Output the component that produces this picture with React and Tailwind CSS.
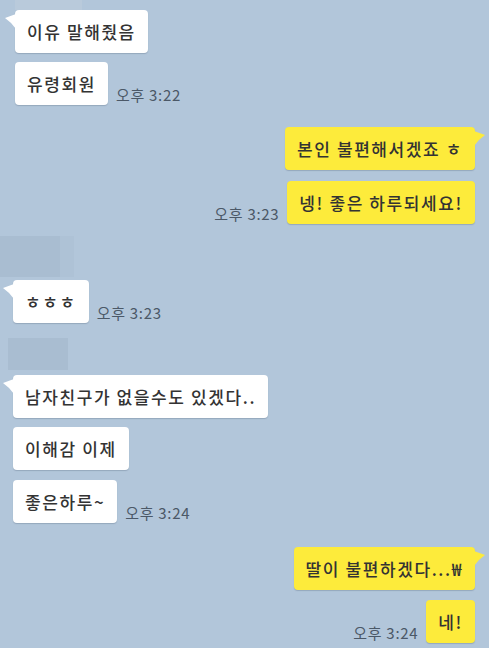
import React from 'react';

const font = { fontFamily: '"Noto Sans CJK KR", "Noto Sans", sans-serif' };

const TailLeft = () => (
  <svg className="absolute left-[-11px] top-[4px]" width="12" height="15" viewBox="0 0 12 15">
    <path d="M12 0 L1 4 Q7 8 12 15 Z" fill="#ffffff" />
  </svg>
);

const TailRight = () => (
  <svg className="absolute right-[-11px] top-[4px]" width="12" height="15" viewBox="0 0 12 15">
    <path d="M0 0 L11 4 Q5 8 0 15 Z" fill="#fdeb3b" />
  </svg>
);

const Bubble = ({ text, mine, tail }) => (
  <div
    className={`relative h-[43px] flex items-center px-[12px] rounded-[4px] text-[17px] font-medium text-[#333333] shadow-[0_1px_1px_rgba(60,80,100,0.25)] ${
      mine ? 'bg-[#fdeb3b]' : 'bg-white'
    }`}
  >
    {tail && (mine ? <TailRight /> : <TailLeft />)}
    <span className="tracking-[1.6px] whitespace-nowrap">{text}</span>
  </div>
);

const Time = ({ t }) => (
  <span className="text-[15px] tracking-[0.7px] text-[#4b5867] whitespace-nowrap leading-none mb-[3px]">{t}</span>
);

const Row = ({ text, mine, tail, time, className = '' }) => (
  <div className={`flex items-end gap-[8px] ${mine ? 'justify-end' : 'justify-start'} ${className}`}>
    {mine && time && <Time t={time} />}
    <Bubble text={text} mine={mine} tail={tail} />
    {!mine && time && <Time t={time} />}
  </div>
);

export default function App() {
  return (
    <div className="w-[489px] h-[648px] overflow-hidden bg-[#b2c6da]" style={font}>
      <div className="flex flex-col pl-[15px] pr-[14px]">
        <div className="h-[10px] w-[67px] bg-[#b9cadb]" />
        <Row text="이유 말해줬음" tail />
        <Row text="유령회원" time="오후 3:22" className="mt-[9px]" />
        <Row text="본인 불편해서겠죠 ㅎ" mine tail className="mt-[22px]" />
        <Row text="넹! 좋은 하루되세요!" mine time="오후 3:23" className="mt-[11px]" />
        <div className="flex mt-[12px] -ml-[15px]">
          <div className="h-[41px] w-[60px] bg-[#a9bdd1]" />
          <div className="h-[41px] w-[14px] bg-[#aec2d6]" />
        </div>
        <Row text="ㅎㅎㅎ" tail time="오후 3:23" className="mt-[3px] -ml-[2px]" />
        <div className="h-[32px] w-[60px] mt-[15px] -ml-[7px] bg-[#a9bdd1]" />
        <Row text="남자친구가 없을수도 있겠다.." tail className="mt-[5px] -ml-[2px]" />
        <Row text="이해감 이제" className="mt-[9px] -ml-[2px]" />
        <Row text="좋은하루~" time="오후 3:24" className="mt-[10px] -ml-[2px]" />
        <Row text="딸이 불편하겠다...₩" mine tail className="mt-[24px]" />
        <Row text="네!" mine time="오후 3:24" className="mt-[10px]" />
      </div>
    </div>
  );
}
